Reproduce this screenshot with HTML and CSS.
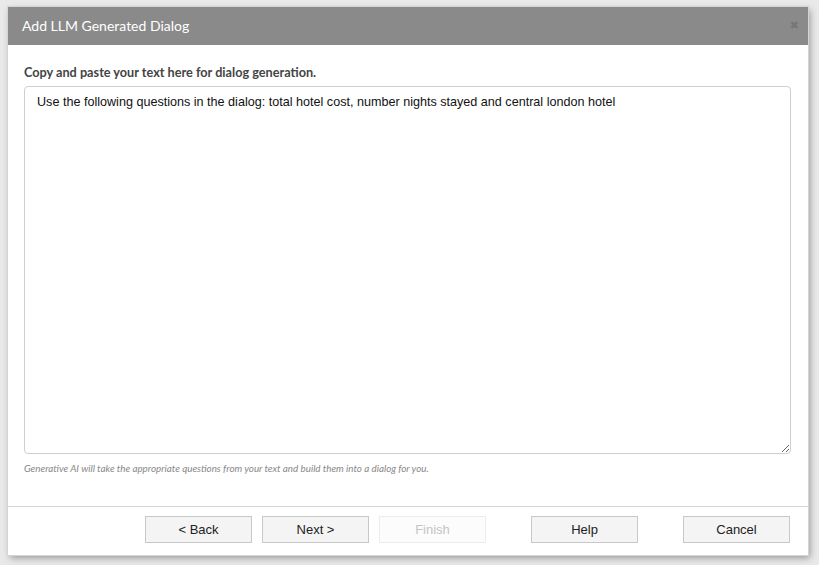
FILE: index.html
```html
<!DOCTYPE html>
<html lang="en">
<head>
    <meta charset="UTF-8">
    <title>Add LLM Generated Dialog</title>
    <link rel="stylesheet" href="styles.css">
</head>
<body>
    <!-- dialog window -->
    <div class="dialog">
        <div class="dialog-header">
            <span class="dialog-title">Add LLM Generated Dialog</span>
            <span class="dialog-close">&#x2716;</span>
        </div>

        <div class="dialog-body">
            <label class="field-label" for="llmText">Copy and paste your text here for dialog generation.</label>
            <textarea class="field-text" id="llmText">Use the following questions in the dialog: total hotel cost, number nights stayed and central london hotel</textarea>
            <p class="field-hint">Generative AI will take the appropriate questions from your text and build them into a dialog for you.</p>
        </div>

        <div class="dialog-footer">
            <button class="btn">&lt; Back</button>
            <button class="btn">Next &gt;</button>
            <button class="btn" disabled>Finish</button>
            <button class="btn btn-gap">Help</button>
            <button class="btn btn-gap">Cancel</button>
        </div>
    </div>
</body>
</html>
```

FILE: styles.css
```css
* {
    margin: 0;
    padding: 0;
    box-sizing: border-box;
}

body {
    width: 819px;
    height: 565px;
    background: #e9e9e9;
    padding: 7px 0 0 8px;
    overflow: hidden;
    font-family: Lato, 'Liberation Sans', sans-serif;
}

/* dialog frame */
.dialog {
    width: 800px;
    height: 548px;
    background: #fff;
    display: flex;
    flex-direction: column;
    box-shadow: 2px 3px 7px rgba(0, 0, 0, 0.35);
    outline: 1px solid #d4d4d4;
}

.dialog-header {
    height: 38px;
    background: #8a8a8a;
    display: flex;
    align-items: center;
    justify-content: space-between;
    padding: 0 9px 0 14px;
}

.dialog-title {
    color: #fff;
    font-size: 14px;
    padding-bottom: 1px;
}

.dialog-close {
    color: #767676;
    font-size: 11px;
    font-family: 'DejaVu Sans', sans-serif;
    padding-bottom: 1px;
}

/* content */
.dialog-body {
    flex: 1;
    display: flex;
    flex-direction: column;
    padding: 20px 17px 0 16px;
}

.field-label {
    font-size: 12.7px;
    font-weight: 700;
    color: #444;
    line-height: 15px;
    margin-bottom: 6px;
}

.field-text {
    height: 368px;
    width: 100%;
    border: 1px solid #cfcfcf;
    border-radius: 4px;
    padding: 7px 12px;
    font-family: 'Liberation Sans', Arial, sans-serif;
    font-size: 12.6px;
    line-height: 16px;
    color: #111;
    resize: vertical;
    outline: none;
}

.field-hint {
    margin-top: 8px;
    font-size: 9.8px;
    font-style: italic;
    color: #888;
}

/* buttons */
.dialog-footer {
    height: 49px;
    border-top: 1px solid #d6d6d6;
    display: flex;
    justify-content: flex-end;
    align-items: flex-start;
    padding: 9px 18px 0 0;
}

.btn {
    width: 107px;
    height: 27px;
    margin-left: 10px;
    border: 1px solid #c8c8c8;
    background: #f4f4f4;
    font-family: 'Liberation Sans', Arial, sans-serif;
    font-size: 13px;
    color: #222;
}

.btn:disabled {
    border-color: #ececec;
    background: #fcfcfc;
    color: #c4c4c4;
}

.btn-gap {
    margin-left: 45px;
}
```
